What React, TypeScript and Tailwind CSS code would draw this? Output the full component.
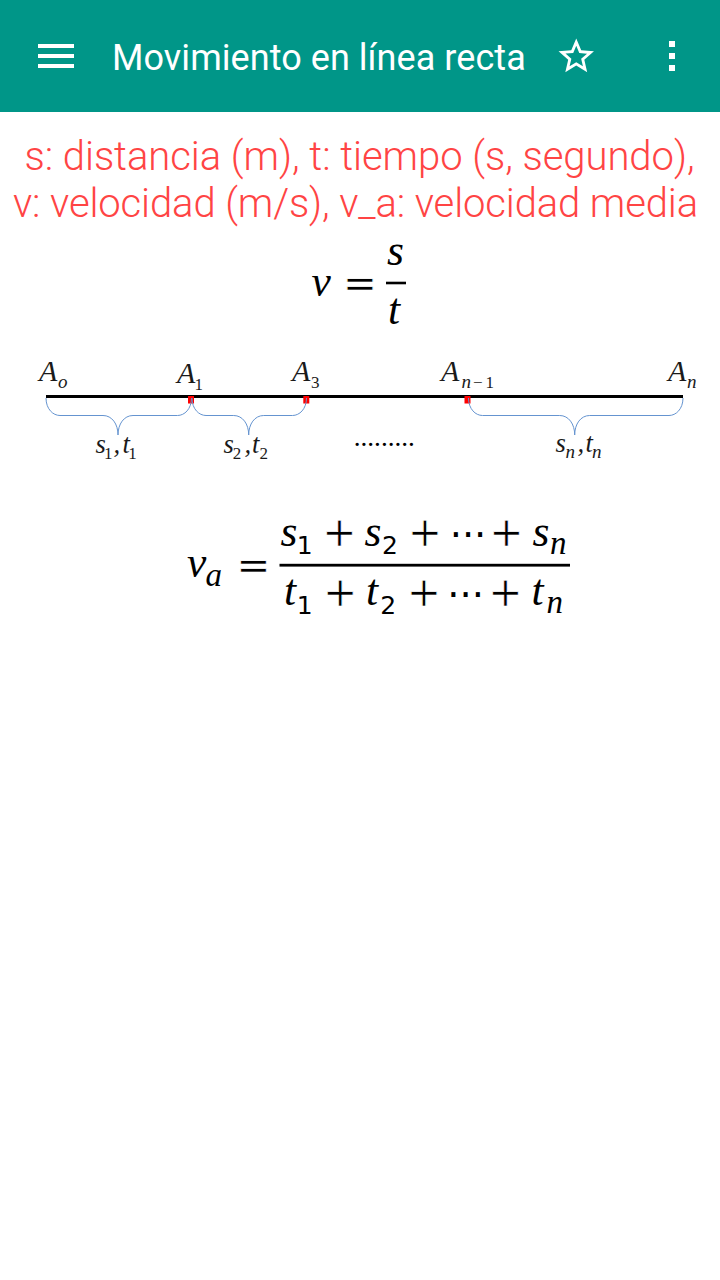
import { ReactNode } from 'react';

type GlyphProps = { x: number; y: number; children: ReactNode };

// slanted variable in a formula
function Var({ x, y, children }: GlyphProps) {
  return (
    <text
      x={x}
      y={y}
      className="font-['Liberation_Serif',serif] text-[43.5px] italic"
    >
      {children}
    </text>
  );
}

function VarSub({ x, y, children }: GlyphProps) {
  return (
    <text
      x={x}
      y={y}
      className="font-['Liberation_Serif',serif] text-[33px] italic"
    >
      {children}
    </text>
  );
}

function NumSub({ x, y, children }: GlyphProps) {
  return (
    <text x={x} y={y} className="font-['DejaVu_Sans',sans-serif] text-[25px]">
      {children}
    </text>
  );
}

// the white outline thins the sign down
function Operator({ x, y, children }: GlyphProps) {
  return (
    <text
      x={x}
      y={y}
      textAnchor="middle"
      className="font-['DejaVu_Sans',sans-serif] text-[41px] stroke-white stroke-[0.7px]"
    >
      {children}
    </text>
  );
}

function Dots({ x, y }: { x: number; y: number }) {
  return (
    <text
      x={x}
      y={y}
      textAnchor="middle"
      className="font-['DejaVu_Sans',sans-serif] text-[38.5px]"
    >
      ···
    </text>
  );
}

// labels of the segment diagram
function Label({ x, y, children }: GlyphProps) {
  return (
    <text x={x} y={y} className="font-['Liberation_Serif',serif] text-[30px] italic">
      {children}
    </text>
  );
}

function SmallLabel({ x, y, children }: GlyphProps) {
  return (
    <text x={x} y={y} className="font-['Liberation_Serif',serif] text-[26.5px] italic">
      {children}
    </text>
  );
}

function Index({ x, y, children }: GlyphProps) {
  return (
    <text x={x} y={y} className="font-['Liberation_Serif',serif] text-[17px]">
      {children}
    </text>
  );
}

function IndexVar({ x, y, children }: GlyphProps) {
  return (
    <text x={x} y={y} className="font-['Liberation_Serif',serif] text-[19px] italic">
      {children}
    </text>
  );
}

function Brace({ from, tip, to }: { from: number; tip: number; to: number }) {
  return (
    <path
      d={`M${from} 58 C${from} 69 ${from + 7} 75.5 ${from + 14} 75.5 H${tip - 15} C${tip - 6} 75.5 ${tip} 84 ${tip} 95 C${tip} 84 ${tip + 6} 75.5 ${tip + 15} 75.5 H${to - 14} C${to - 7} 75.5 ${to} 69 ${to} 58`}
      className="fill-none stroke-[#6594d0] stroke-1"
    />
  );
}

function Header() {
  return (
    <header className="flex h-28 items-center bg-[#009688] text-white">
      <button className="ml-[38px] flex h-6 w-9 flex-col justify-between" aria-label="Menu">
        <span className="h-1 w-full bg-white" />
        <span className="h-1 w-full bg-white" />
        <span className="h-1 w-full bg-white" />
      </button>
      <h1 className="ml-[38px] w-[443px] whitespace-nowrap pt-[3px] text-[36px] leading-[42px] tracking-[0.06px]">
        Movimiento en línea recta
      </h1>
      <button aria-label="Favorito">
        <svg viewBox="0 0 24 24" className="size-[42.5px] fill-white">
          <path d="M22 9.24l-7.19-.62L12 2 9.19 8.63 2 9.24l5.46 4.73L5.82 21 12 17.27 18.18 21l-1.63-7.03L22 9.24zM12 15.4l-3.76 2.27 1-4.28-3.32-2.88 4.38-.38L12 6.1l1.71 4.04 4.38.38-3.32 2.88 1 4.28L12 15.4z" />
        </svg>
      </button>
      <button className="ml-[71.5px] flex flex-col gap-1.5" aria-label="Opciones">
        <span className="size-1.5 bg-white" />
        <span className="size-1.5 bg-white" />
        <span className="size-1.5 bg-white" />
      </button>
    </header>
  );
}

function SpeedFormula() {
  return (
    <svg viewBox="0 225 720 115" className="block h-[115px] w-full">
      <Var x={311.5} y={295.5}>v</Var>
      <Operator x={360} y={296.8}>=</Operator>
      <Var x={387} y={264.5}>s</Var>
      <rect x={386} y={281.7} width={20} height={2.6} />
      <Var x={388} y={323.5}>t</Var>
    </svg>
  );
}

function SegmentDiagram() {
  return (
    <svg viewBox="0 0 720 140" className="block h-[140px] w-full">
      <rect x={46} y={55} width={637} height={3} />
      <rect x={188} y={56} width={6} height={7.5} className="fill-[#f00]" />
      <rect x={303.3} y={56} width={6} height={7.5} className="fill-[#f00]" />
      <rect x={464.5} y={56} width={6} height={7.5} className="fill-[#f00]" />
      <Brace from={46} tip={118} to={191.5} />
      <Brace from={192} tip={248.7} to={306.5} />
      <Brace from={468.5} tip={574.7} to={683} />

      <g className="fill-[#1a1a1a]">
        <Label x={39} y={41}>A</Label>
        <IndexVar x={58} y={48}>o</IndexVar>
        <Label x={177} y={42.7}>A</Label>
        <Index x={194.5} y={49.5}>1</Index>
        <Label x={292} y={41}>A</Label>
        <Index x={311} y={48}>3</Index>
        <Label x={441} y={41}>A</Label>
        <IndexVar x={461.5} y={48}>n</IndexVar>
        <Index x={473} y={48}>−</Index>
        <Index x={485.5} y={48}>1</Index>
        <Label x={668} y={41}>A</Label>
        <IndexVar x={687} y={47.5}>n</IndexVar>

        <SmallLabel x={95.5} y={113.3}>s</SmallLabel>
        <Index x={104} y={118.5}>1</Index>
        <SmallLabel x={113.5} y={113.3}>,</SmallLabel>
        <SmallLabel x={122.5} y={113.3}>t</SmallLabel>
        <Index x={128.3} y={118.5}>1</Index>

        <SmallLabel x={223.5} y={113.3}>s</SmallLabel>
        <Index x={232.7} y={119}>2</Index>
        <SmallLabel x={244.5} y={113.3}>,</SmallLabel>
        <SmallLabel x={252} y={113.3}>t</SmallLabel>
        <Index x={259.5} y={119}>2</Index>

        <SmallLabel x={555.5} y={111.5}>s</SmallLabel>
        <IndexVar x={565.5} y={117.5}>n</IndexVar>
        <SmallLabel x={577.5} y={111.5}>,</SmallLabel>
        <SmallLabel x={585.5} y={111.5}>t</SmallLabel>
        <IndexVar x={592} y={117.5}>n</IndexVar>
      </g>

      <text
        x={353.7}
        y={106}
        className="font-['Liberation_Serif',serif] text-[27.2px]"
      >
        .........
      </text>
    </svg>
  );
}

function AverageSpeedFormula() {
  return (
    <svg viewBox="0 500 720 130" className="mt-5 block h-[130px] w-full">
      <Var x={187} y={577}>v</Var>
      <VarSub x={205.5} y={586}>a</VarSub>
      <Operator x={253.5} y={578.5}>=</Operator>
      <rect x={279.5} y={563.8} width={290.5} height={2.8} />

      <Var x={280.5} y={546}>s</Var>
      <NumSub x={296.7} y={553.7}>1</NumSub>
      <Operator x={339.5} y={546.4}>+</Operator>
      <Var x={364.5} y={546}>s</Var>
      <NumSub x={382} y={553.7}>2</NumSub>
      <Operator x={425} y={546.4}>+</Operator>
      <Dots x={468} y={548.2} />
      <Operator x={506.5} y={546.4}>+</Operator>
      <Var x={532.5} y={546}>s</Var>
      <VarSub x={550} y={553.5}>n</VarSub>

      <Var x={284} y={605}>t</Var>
      <NumSub x={296.7} y={613.5}>1</NumSub>
      <Operator x={340.3} y={606}>+</Operator>
      <Var x={366} y={605}>t</Var>
      <NumSub x={380.2} y={613.5}>2</NumSub>
      <Operator x={424} y={606}>+</Operator>
      <Dots x={465.7} y={607.8} />
      <Operator x={505.5} y={606}>+</Operator>
      <Var x={531.5} y={605}>t</Var>
      <VarSub x={546.5} y={613}>n</VarSub>
    </svg>
  );
}

export default function App() {
  return (
    <div className="min-h-[1280px] w-full bg-white font-[Roboto,sans-serif] text-black">
      <Header />
      <main className="pt-[21px]">
        <div className="mx-3.5 h-[92px] whitespace-nowrap text-[40px] font-light leading-[47px] text-[#ff4444]">
          <p className="pl-[10.5px] tracking-[-0.05px]">
            s: distancia (m), t: tiempo (s, segundo),
          </p>
          <p className="-ml-px tracking-[-0.12px]">
            v: velocidad (m/s), v_a: velocidad media
          </p>
        </div>
        <SpeedFormula />
        <SegmentDiagram />
        <AverageSpeedFormula />
      </main>
    </div>
  );
}
